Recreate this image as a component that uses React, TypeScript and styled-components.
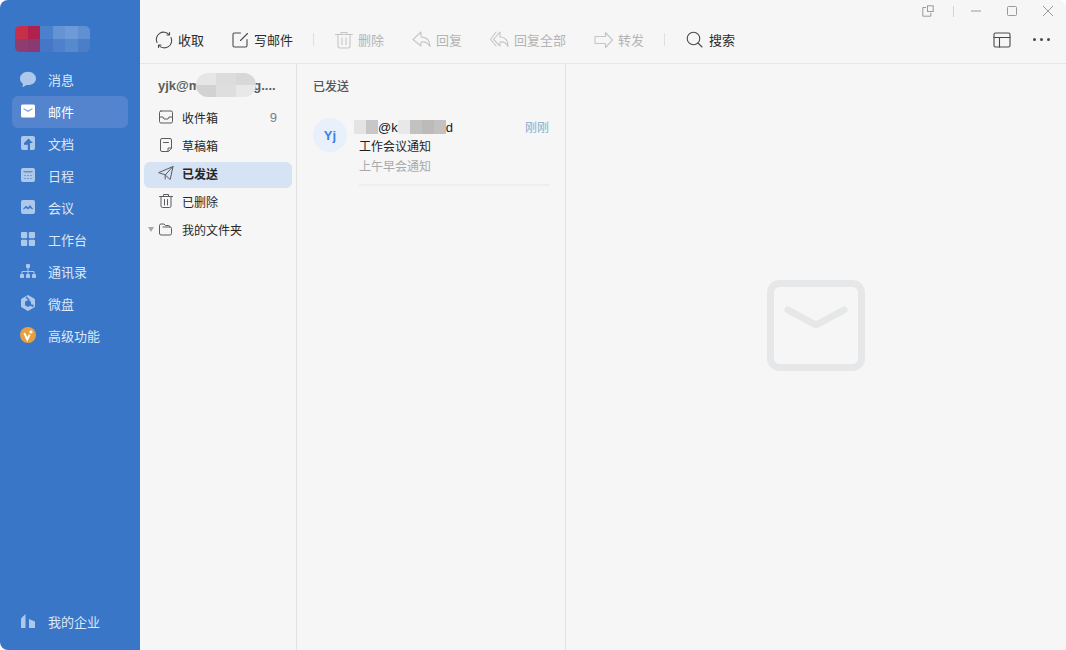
import React from 'react';
import styled, { createGlobalStyle } from 'styled-components';

const GlobalStyle = createGlobalStyle`
  html, body {
    margin: 0;
    padding: 0;
    background: #ffffff;
    font-family: "Liberation Sans", "Noto Sans CJK SC", sans-serif;
  }
`;

const NavMessage = () => (
  <svg width="16" height="16" viewBox="0 0 16 16" fill="#adc8e9">
    <path d="M8 .8c4.300 0 8 2.900 8 6.800 0 3.900-3.500 6.500-7.700 6.500-.6 0-1.100 0-1.700-.1L3.100 15.900c-.4.200-.7-.1-.6-.5l.4-2.700C1 11.500 0 9.700 0 7.600 0 3.700 3.700.8 8 .8z" />
  </svg>
);
const NavMail = () => (
  <svg width="16" height="16" viewBox="0 0 16 16">
    <rect x="1" y="1.500" width="14" height="13" rx="1.500" fill="#ffffff" />
    <path d="M4 6l4 2.300L12 6" fill="none" stroke="#7fa5dc" strokeWidth="1.200" strokeLinecap="round" />
  </svg>
);
const NavDoc = () => (
  <svg width="16" height="16" viewBox="0 0 16 16">
    <rect x="1" y="1" width="14" height="14" rx="2" fill="#adc8e9" />
    <path d="M8.500 3.500L13 8H10v7H7.800V8H4z" fill="#3a76c8" />
    <path d="M4 8h4v1.800H4z" fill="#3a76c8" />
  </svg>
);
const NavCalendar = () => (
  <svg width="16" height="16" viewBox="0 0 16 16">
    <rect x="1" y="1" width="14" height="14" rx="2" fill="#adc8e9" />
    <path d="M3.500 4.800h9" stroke="#3a76c8" strokeWidth="1" />
    <path d="M4.500 8.500h1M7.500 8.500h1M10.500 8.500h1M4.500 11.500h1M7.500 11.500h1M10.500 11.500h1" stroke="#3a76c8" strokeWidth="1" />
  </svg>
);
const NavMeeting = () => (
  <svg width="16" height="16" viewBox="0 0 16 16">
    <rect x="1" y="1" width="14" height="14" rx="2" fill="#adc8e9" />
    <path d="M3.500 10l2.500-3 2 2 2-2.500 2.500 3.500-2.500-1.500-2 1.500-2-1.500z" fill="#3a76c8" stroke="#3a76c8" strokeWidth=".8" strokeLinejoin="round" />
  </svg>
);
const NavGrid = () => (
  <svg width="16" height="16" viewBox="0 0 16 16" fill="#adc8e9">
    <rect x="1" y="1" width="6.200" height="6.200" rx="1" />
    <rect x="8.800" y="1" width="6.200" height="6.200" rx="1" />
    <rect x="1" y="8.800" width="6.200" height="6.200" rx="1" />
    <rect x="8.800" y="8.800" width="6.200" height="6.200" rx="1" />
  </svg>
);
const NavContacts = () => (
  <svg width="16" height="16" viewBox="0 0 16 16">
    <g fill="#adc8e9">
      <rect x="6" y="1" width="4" height="4" rx=".8" />
      <rect x="0" y="11" width="4" height="4" rx=".8" />
      <rect x="6" y="11" width="4" height="4" rx=".8" />
      <rect x="12" y="11" width="4" height="4" rx=".8" />
    </g>
    <path d="M8 5v6M2 11V8.500h12V11" fill="none" stroke="#adc8e9" strokeWidth="1" />
  </svg>
);
const NavDrive = () => (
  <svg width="16" height="16" viewBox="0 0 16 16">
    <path d="M8 .5l6.500 3.700v7.600L8 15.500l-6.500-3.700V4.200z" fill="#adc8e9" stroke="#adc8e9" strokeLinejoin="round" />
    <path d="M8 5l3 1.700v3.500L8 12 5 10.200V6.700z" fill="#3a76c8" />
    <path d="M6.500 1.500L10 5l-1 1-3.500-3.500zM14 10l-4-1v1.800l3 1.200z" fill="#3a76c8" />
  </svg>
);
const NavPremium = () => (
  <svg width="16" height="16" viewBox="0 0 16 16">
    <circle cx="8" cy="8" r="8" fill="#e6a043" />
    <path d="M4.200 6L7.300 12.500l2.400-4.800" fill="none" stroke="#ffffff" strokeWidth="1.900" />
    <path d="M11 2.500l.7 1.800 1.800.7-1.800.7-.7 1.800-.7-1.800L8.500 5l1.800-.7z" fill="#ffffff" />
  </svg>
);
const NavCompany = () => (
  <svg width="16" height="16" viewBox="0 0 16 16" fill="#adc8e9">
    <path d="M1 15V5.500L5.500 1V15z" />
    <path d="M9 15V6l6 2.500V15z" />
  </svg>
);

const ToolIcon = styled.svg<{ $w?: number }>`
  width: ${(p) => p.$w ?? 18}px;
  height: 18px;
  flex: none;
  fill: none;
  stroke: currentColor;
  stroke-width: 1.100;
  stroke-linejoin: round;
  stroke-linecap: round;
`;

const navItems = [
  { label: '消息', icon: <NavMessage /> },
  { label: '邮件', icon: <NavMail />, active: true },
  { label: '文档', icon: <NavDoc /> },
  { label: '日程', icon: <NavCalendar /> },
  { label: '会议', icon: <NavMeeting /> },
  { label: '工作台', icon: <NavGrid /> },
  { label: '通讯录', icon: <NavContacts /> },
  { label: '微盘', icon: <NavDrive /> },
  { label: '高级功能', icon: <NavPremium /> },
];

const logoRows = [
  ['#c4304a', '#b0214f', '#4a80cc', '#6494d4', '#6f9ad8', '#5f90d2'],
  ['#8f3c6e', '#8a3a70', '#4478c6', '#4f80cb', '#568acc', '#4b7ec8'],
];
const accountMask = ['#e6e6e6', '#dcdcdc', '#d8d8d8', '#d2d2d2', '#dedede', '#e8e8e8'];
const senderMaskA = ['#e4e4e4', '#c8c6c6'];
const senderMaskB = ['#e8e8e8', '#c4c1c1', '#bdbaba', '#c4c1c1'];

export default function App() {
  return (
    <Window>
      <GlobalStyle />
      <Sidebar>
        <Logo>
          {logoRows.flat().map((c, i) => (
            <MaskCell key={i} $color={c} />
          ))}
        </Logo>
        <Nav>
          {navItems.map((item) => (
            <NavItem key={item.label} $active={item.active}>
              {item.icon}
              <span>{item.label}</span>
            </NavItem>
          ))}
        </Nav>
        <NavItem>
          <NavCompany />
          <span>我的企业</span>
        </NavItem>
      </Sidebar>

      <Main>
        <TitleBar>
          <WinIcon viewBox="0 0 12 12">
            <path d="M4 2.500H.8v8.700h8V8" />
            <rect x="5.500" y=".8" width="5.700" height="5.700" />
          </WinIcon>
          <WinDivider />
          <WinIcon viewBox="0 0 12 12"><path d="M1 6h10" /></WinIcon>
          <WinIcon viewBox="0 0 12 12"><rect x="1.500" y="1.500" width="9" height="9" rx="1" /></WinIcon>
          <WinIcon viewBox="0 0 12 12"><path d="M1 1l10 10M11 1L1 11" /></WinIcon>
        </TitleBar>

        <Toolbar>
          <ToolButton>
            <ToolIcon viewBox="0 0 18 18">
              <path d="M2 11.500A7.300 7.300 0 0 1 14 3.500" />
              <path d="M16 6.500A7.300 7.300 0 0 1 4 14.500" />
              <path d="M14.500 1.500v2.500h-2.500M3.500 16.500V14h2.500" />
            </ToolIcon>
            收取
          </ToolButton>
          <ToolButton>
            <ToolIcon $w={17} viewBox="0 0 17 18">
              <path d="M8.500 2H2.500A1.500 1.500 0 0 0 1 3.500v11A1.500 1.500 0 0 0 2.500 16h11a1.500 1.500 0 0 0 1.500-1.500V8.500" />
              <path d="M8.500 9.500L15.500 2.500" />
            </ToolIcon>
            写邮件
          </ToolButton>
          <ToolDivider />
          <ToolButton $disabled>
            <ToolIcon viewBox="0 0 18 18">
              <path d="M.5 3.500h17M6 3.500V1.500h6v2M3 3.500V15.500A1.500 1.500 0 0 0 4.500 17h9a1.500 1.500 0 0 0 1.500-1.500V3.500M7 7v6.500M11 7v6.500" />
            </ToolIcon>
            删除
          </ToolButton>
          <ToolButton $disabled>
            <ToolIcon $w={19} viewBox="0 0 19 18">
              <path d="M9 1L1 8.500 9 15v-4c4-.5 7 .5 9 4.500.3-5.500-3-9.500-9-9.500z" />
            </ToolIcon>
            回复
          </ToolButton>
          <ToolButton $disabled>
            <ToolIcon $w={19} viewBox="0 0 19 18">
              <path d="M6 1L.5 8.500 6 15M10 1L3.500 8.500 10 15v-4c3.500-.5 6 .5 8 4.500.3-5.500-2.500-9.500-8-9.500z" />
            </ToolIcon>
            回复全部
          </ToolButton>
          <ToolButton $disabled>
            <ToolIcon $w={19} viewBox="0 0 19 18">
              <path d="M11.500 1.500L18.500 9l-7 7.500V12.500H1v-7h10.500z" />
            </ToolIcon>
            转发
          </ToolButton>
          <ToolDivider />
          <ToolButton>
            <ToolIcon viewBox="0 0 18 18">
              <circle cx="7.500" cy="7.500" r="6.300" />
              <path d="M12 12l4 4" />
            </ToolIcon>
            搜索
          </ToolButton>
          <ToolbarRight>
            <ToolIcon viewBox="0 0 18 18">
              <rect x="1" y="2" width="16" height="14" rx="1.500" />
              <path d="M1 6.500h16M6.500 6.500V16" />
            </ToolIcon>
            <Dots>
              <i /><i /><i />
            </Dots>
          </ToolbarRight>
        </Toolbar>

        <Panes>
          <Folders>
            <Account>
              <span>yjk@m</span>
              <AccountMask>
                {accountMask.map((c, i) => <MaskCell key={i} $color={c} />)}
              </AccountMask>
              <span>g....</span>
            </Account>
            <FolderRow>
              <FolderIcon viewBox="0 0 16 16">
                <rect x="1.500" y="2" width="13" height="12" rx="1.500" />
                <path d="M1.500 8h3.500l1 2h4l1-2h3.500" />
              </FolderIcon>
              <span>收件箱</span>
              <Count>9</Count>
            </FolderRow>
            <FolderRow>
              <FolderIcon viewBox="0 0 16 16">
                <path d="M10 14.500H4A1.500 1.500 0 0 1 2.500 13V3A1.500 1.500 0 0 1 4 1.500h8A1.500 1.500 0 0 1 13.500 3v8zM10 14.500V11h3.500M5.500 5.500h5" />
              </FolderIcon>
              <span>草稿箱</span>
            </FolderRow>
            <FolderRow $active>
              <FolderIcon viewBox="0 0 16 16">
                <path d="M1 7.500L15 1.500l-2.800 13-5-4.500zM15 1.500L7.200 10v4" />
              </FolderIcon>
              <span>已发送</span>
            </FolderRow>
            <FolderRow>
              <FolderIcon viewBox="0 0 16 16">
                <path d="M1.500 3.500h13M5.500 3.500v-2h5v2M3 3.500V13A1.500 1.500 0 0 0 4.500 14.500h7A1.500 1.500 0 0 0 13 13V3.500M6.500 6.500V12M9.500 6.500V12" />
              </FolderIcon>
              <span>已删除</span>
            </FolderRow>
            <FolderRow>
              <Caret />
              <FolderIcon viewBox="0 0 16 16">
                <path d="M1.500 12.500V4.500A1.500 1.500 0 0 1 3 3h3l1.500 1.500h3A1.500 1.500 0 0 1 12 6M1.500 12.500A1.500 1.500 0 0 0 3 14h9a1.500 1.500 0 0 0 1.500-1.500V7.500A1.500 1.500 0 0 0 12 6H5" />
              </FolderIcon>
              <span>我的文件夹</span>
            </FolderRow>
          </Folders>

          <MailList>
            <ListTitle>已发送</ListTitle>
            <MailRow>
              <Avatar>Yj</Avatar>
              <MailBody>
                <Sender>
                  <SenderMask $w={24}>
                    {senderMaskA.map((c, i) => <MaskCell key={i} $color={c} />)}
                  </SenderMask>
                  <span>@k</span>
                  <SenderMask $w={48}>
                    {senderMaskB.map((c, i) => <MaskCell key={i} $color={c} />)}
                  </SenderMask>
                  <span>d</span>
                  <Time>刚刚</Time>
                </Sender>
                <Subject>工作会议通知</Subject>
                <Preview>上午早会通知</Preview>
              </MailBody>
            </MailRow>
          </MailList>

          <Detail>
            <svg width="98" height="91" viewBox="0 0 98 91" fill="none" stroke="#e6e7e8" strokeWidth="7" strokeLinecap="round" strokeLinejoin="round">
              <rect x="3.500" y="3.500" width="91" height="84" rx="9" />
              <path d="M21 30l28 15 28-15" />
            </svg>
          </Detail>
        </Panes>
      </Main>
    </Window>
  );
}

const Window = styled.div`
  width: 1066px;
  height: 650px;
  display: flex;
  overflow: hidden;
  font-family: "Liberation Sans", "Noto Sans CJK SC", sans-serif;
`;

const Sidebar = styled.aside`
  width: 140px;
  flex: none;
  display: flex;
  flex-direction: column;
  padding: 26px 12px 12px;
  box-sizing: border-box;
  background: #3a76c8;
  border-radius: 8px 0 0 8px;
`;

const MaskCell = styled.div<{ $color: string }>`
  background: ${(p) => p.$color};
`;

const Logo = styled.div`
  width: 75px;
  height: 26px;
  margin: 0 0 12px 3px;
  display: grid;
  grid-template-columns: repeat(6, 1fr);
  grid-template-rows: repeat(2, 1fr);
  border-radius: 5px;
  overflow: hidden;
`;

const Nav = styled.nav`
  flex: 1;
  display: flex;
  flex-direction: column;
`;

const NavItem = styled.div<{ $active?: boolean }>`
  height: 32px;
  box-sizing: border-box;
  display: flex;
  align-items: center;
  gap: 12px;
  padding: 0 0 2px 8px;
  flex: none;
  border-radius: 6px;
  font-size: 13px;
  color: ${(p) => (p.$active ? '#ffffff' : '#dbe8f8')};
  background: ${(p) => (p.$active ? '#5584cf' : 'transparent')};
`;

const Main = styled.main`
  flex: 1;
  min-width: 0;
  display: flex;
  flex-direction: column;
  background: #f6f6f6;
  border-radius: 0 8px 0 0;
`;

const TitleBar = styled.div`
  height: 22px;
  flex: none;
  display: flex;
  align-items: center;
  justify-content: flex-end;
  gap: 24px;
  padding-right: 12px;
`;

const WinIcon = styled.svg`
  width: 12px;
  height: 12px;
  fill: none;
  stroke: #9a9a9a;
  stroke-width: 1;
`;

const WinDivider = styled.div`
  width: 1px;
  height: 11px;
  margin: 0 -8px 0 -5px;
  background: #d4d4d4;
`;

const Toolbar = styled.div`
  height: 42px;
  flex: none;
  box-sizing: border-box;
  display: flex;
  align-items: center;
  gap: 28px;
  padding: 0 15px 6px;
  border-bottom: 1px solid #e6e6e6;
`;

const ToolButton = styled.div<{ $disabled?: boolean }>`
  display: flex;
  align-items: center;
  gap: 5px;
  font-size: 13px;
  white-space: nowrap;
  color: ${(p) => (p.$disabled ? '#b4b4b4' : '#2c2c2c')};

  svg {
    color: ${(p) => (p.$disabled ? '#c6c6c6' : '#4a4a4e')};
  }
`;

const ToolDivider = styled.div`
  width: 1px;
  height: 13px;
  margin: 0 -7px 0 -8px;
  background: #e0e0e0;
`;

const ToolbarRight = styled.div`
  margin-left: auto;
  display: flex;
  align-items: center;
  gap: 22px;
  color: #4a4a4e;
`;

const Dots = styled.div`
  display: flex;
  gap: 4px;
  padding-right: 1px;

  i {
    width: 3px;
    height: 3px;
    border-radius: 50%;
    background: #4a4a4e;
  }
`;

const Panes = styled.div`
  flex: 1;
  min-height: 0;
  display: flex;
`;

const Folders = styled.div`
  width: 157px;
  flex: none;
  box-sizing: border-box;
  padding: 7px 4px 0;
  border-right: 1px solid #e2e2e2;
  display: flex;
  flex-direction: column;
  gap: 2px;
`;

const Account = styled.div`
  height: 28px;
  display: flex;
  align-items: center;
  padding-left: 14px;
  margin-bottom: 5px;
  font-size: 13px;
  font-weight: 700;
  color: #5d5d5d;
  white-space: nowrap;
`;

const AccountMask = styled.div`
  width: 60px;
  height: 24px;
  margin: 0 -3px 0 -4px;
  display: grid;
  grid-template-columns: repeat(3, 1fr);
  grid-template-rows: repeat(2, 1fr);
  border-radius: 12px;
  overflow: hidden;
  position: relative;
`;

const FolderRow = styled.div<{ $active?: boolean }>`
  height: 26px;
  flex: none;
  box-sizing: border-box;
  position: relative;
  display: flex;
  align-items: center;
  gap: 8px;
  padding: 0 15px 4px 14px;
  border-radius: 6px;
  font-size: 12px;
  font-weight: ${(p) => (p.$active ? 700 : 400)};
  color: #262626;
  background: ${(p) => (p.$active ? '#d6e3f5' : 'transparent')};
`;

const FolderIcon = styled.svg`
  width: 16px;
  height: 16px;
  flex: none;
  fill: none;
  stroke: #5c5c60;
  stroke-width: 1;
  stroke-linejoin: round;
  stroke-linecap: round;
`;

const Count = styled.span`
  margin-left: auto;
  font-size: 13px;
  color: #74808c;
`;

const Caret = styled.i`
  position: absolute;
  left: 4px;
  top: 9px;
  border: 3px solid transparent;
  border-top: 5px solid #a8a8a8;
  border-bottom: 0;
`;

const MailList = styled.div`
  width: 269px;
  flex: none;
  box-sizing: border-box;
  border-right: 1px solid #e2e2e2;
  padding: 0 16px;
`;

const ListTitle = styled.div`
  height: 42px;
  display: flex;
  align-items: center;
  font-size: 12px;
  font-weight: 500;
  color: #555555;
`;

const MailRow = styled.div`
  display: flex;
  gap: 12px;
  padding-top: 12px;
`;

const Avatar = styled.div`
  width: 34px;
  height: 34px;
  flex: none;
  border-radius: 50%;
  display: flex;
  align-items: center;
  justify-content: center;
  background: #e8f0fb;
  color: #3b82e8;
  font-size: 13px;
  font-weight: 700;
`;

const MailBody = styled.div`
  flex: 1;
  min-width: 0;
  height: 69px;
  box-sizing: border-box;
  border-bottom: 2px solid #eeeeee;
  margin-top: -1px;
`;

const Sender = styled.div`
  height: 20px;
  display: flex;
  align-items: center;
  font-size: 13px;
  color: #1a1a1a;
`;

const SenderMask = styled.div<{ $w: number }>`
  width: ${(p) => p.$w}px;
  height: 14px;
  flex: none;
  display: grid;
  grid-auto-flow: column;
  grid-auto-columns: 1fr;
  &:first-child {
    margin-left: -5px;
  }
`;

const Time = styled.span`
  margin-left: auto;
  padding-bottom: 2px;
  font-size: 12px;
  color: #8eaac6;
`;

const Subject = styled.div`
  height: 20px;
  line-height: 20px;
  font-size: 12px;
  color: #1f1f1f;
`;

const Preview = styled.div`
  height: 20px;
  line-height: 20px;
  font-size: 12px;
  color: #a9a9a9;
`;

const Detail = styled.div`
  flex: 1;
  display: flex;
  align-items: flex-start;
  justify-content: center;
  padding-top: 216px;
`;
